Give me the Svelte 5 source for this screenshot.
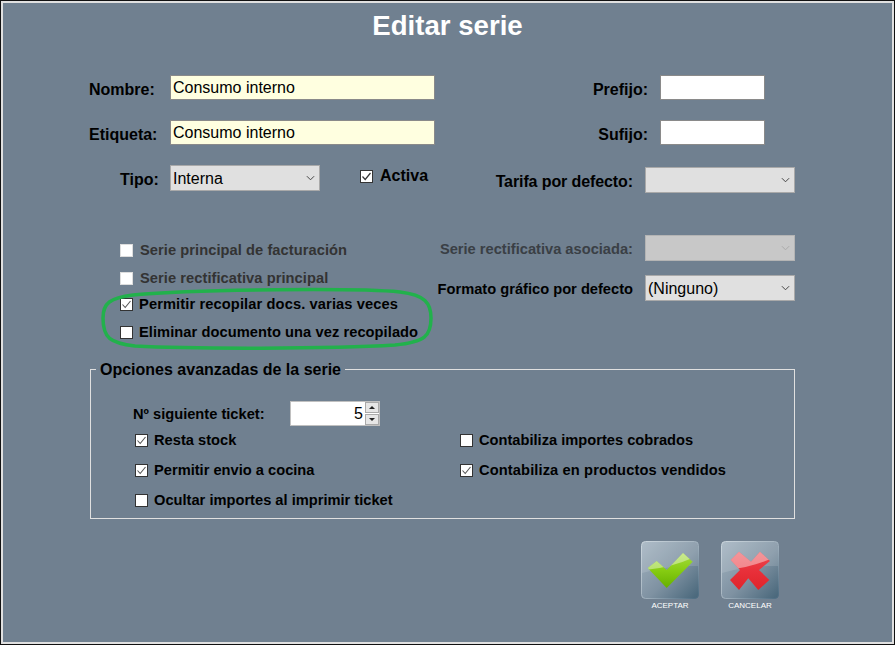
<script>
  const greenD = "M133 295 C 200 289, 360 288, 400 292 C 425 295, 431 303, 431 318 C 431 336, 425 342, 395 345 C 330 349, 190 349, 135 346 C 110 343, 103 338, 103 318 C 103 303, 110 298, 133 295 Z";
</script>

{#snippet check(text, checked = false, cls = "")}
  <label class="chk {cls}">
    <span class="box">
      {#if checked}
        <svg viewBox="0 0 13 13" width="13" height="13" aria-hidden="true"><path d="M2.5 6.5 L5.2 9.5 L10.5 3" fill="none" stroke="#555" stroke-width="1.1" /></svg>
      {/if}
    </span>
    <span>{text}</span>
  </label>
{/snippet}

{#snippet dropdown(value, cls = "")}
  <div class="select {cls}">
    <span>{value}</span>
    <svg viewBox="0 0 10 6" width="9" height="6" aria-hidden="true"><path d="M1 1 L5 5 L9 1" fill="none" stroke="currentColor" stroke-width="1.1" /></svg>
  </div>
{/snippet}

<div class="window">
  <h1>Editar serie</h1>

  <div class="top">
    <div class="col-left">
      <div class="row r1">
        <span class="lbl l-nombre">Nombre:</span>
        <input class="text yellow" value="Consumo interno" />
      </div>
      <div class="row r2">
        <span class="lbl l-etiqueta">Etiqueta:</span>
        <input class="text yellow" value="Consumo interno" />
      </div>
      <div class="row r3">
        <span class="lbl l-tipo">Tipo:</span>
        {@render dropdown("Interna", "tipo")}
        <label class="activa">
          <span class="box"><svg viewBox="0 0 13 13" width="13" height="13" aria-hidden="true"><path d="M2.5 6.5 L5.2 9.5 L10.5 3" fill="none" stroke="#333" stroke-width="1.2" /></svg></span>
          <span>Activa</span>
        </label>
      </div>
      <div class="checks">
        {@render check("Serie principal de facturación", false, "off wide")}
        {@render check("Serie rectificativa principal", false, "off wide second")}
        {@render check("Permitir recopilar docs. varias veces", true, "wider")}
        {@render check("Eliminar documento una vez recopilado", false, "wide")}
      </div>
    </div>

    <div class="col-right">
      <div class="row rr1">
        <span class="lbl">Prefijo:</span>
        <input class="text small" />
      </div>
      <div class="row rr2">
        <span class="lbl">Sufijo:</span>
        <input class="text small" />
      </div>
      <div class="row rr3">
        <span class="lbl tarifa">Tarifa por defecto:</span>
        {@render dropdown("")}
      </div>
      <div class="row rr4">
        <span class="lbl dis">Serie rectificativa asociada:</span>
        {@render dropdown("", "disabled")}
      </div>
      <div class="row rr5">
        <span class="lbl fmt">Formato gráfico por defecto</span>
        {@render dropdown("(Ninguno)")}
      </div>
    </div>
  </div>

  <fieldset>
    <legend>Opciones avanzadas de la serie</legend>
    <div class="ticket">
      <span>Nº siguiente ticket:</span>
      <div class="spin">
        <span class="num">5</span>
        <div class="arrows">
          <div class="arrow"><i class="up"></i></div>
          <div class="arrow"><i class="down"></i></div>
        </div>
      </div>
    </div>
    <div class="adv">
      <div class="adv-col">
        {@render check("Resta stock", true)}
        {@render check("Permitir envio a cocina", true)}
        {@render check("Ocultar importes al imprimir ticket", false)}
      </div>
      <div class="adv-col right">
        {@render check("Contabiliza importes cobrados", false)}
        {@render check("Contabiliza en productos vendidos", true, "wider")}
      </div>
    </div>
  </fieldset>

  <div class="actions">
    <div class="action">
      <div class="tile">
        <svg viewBox="0 0 58 58" width="58" height="58" aria-hidden="true">
          <defs>
            <linearGradient id="tb" x1="0" y1="0" x2="1" y2="1">
              <stop offset="0" stop-color="#a3b3c0" />
              <stop offset="0.55" stop-color="#7f92a2" />
              <stop offset="1" stop-color="#466579" />
            </linearGradient>
            <linearGradient id="ts" x1="0" y1="0" x2="1" y2="1">
              <stop offset="0" stop-color="#ccd6dd" />
              <stop offset="0.5" stop-color="#a5b4c0" />
              <stop offset="1" stop-color="#4a6a80" />
            </linearGradient>
            <linearGradient id="gc" x1="0" y1="0" x2="0" y2="1">
              <stop offset="0" stop-color="#a6dc40" />
              <stop offset="0.5" stop-color="#86cc12" />
              <stop offset="1" stop-color="#66b000" />
            </linearGradient>
            <linearGradient id="rc" x1="0" y1="0" x2="0" y2="1">
              <stop offset="0" stop-color="#ec4a50" />
              <stop offset="0.5" stop-color="#e8303a" />
              <stop offset="1" stop-color="#e0242a" />
            </linearGradient>
            <clipPath id="cg"><path d="M6.7 27 L15.7 20 L25.7 29 L42 12 L51.7 20.7 L25.7 47 Z" /></clipPath>
            <clipPath id="cr"><path d="M9.7 19 L18 10.7 L30 20.7 L39 10.7 L49 20 L38 29 L48.3 39 L37.3 49 L27.3 37.3 L18 49 L9 39 L19 29 Z" /></clipPath>
          </defs>
          <rect x="0.5" y="0.5" width="57" height="57" rx="4" fill="url(#tb)" stroke="url(#ts)" />
          <path d="M1 5 Q1 1 5 1 H53 Q57 1 57 5 V25 Q29 24 1 32 Z" fill="#fff" opacity="0.13" />
          <path d="M6.7 27 L15.7 20 L25.7 29 L42 12 L51.7 20.7 L25.7 47 Z" fill="url(#gc)" />
          <path d="M0 29 Q30 28 58 14 V0 H0 Z" fill="#fff" opacity="0.4" clip-path="url(#cg)" />
        </svg>
      </div>
      <span>ACEPTAR</span>
    </div>
    <div class="action">
      <div class="tile">
        <svg viewBox="0 0 58 58" width="58" height="58" aria-hidden="true">
          <rect x="0.5" y="0.5" width="57" height="57" rx="4" fill="url(#tb)" stroke="url(#ts)" />
          <path d="M1 5 Q1 1 5 1 H53 Q57 1 57 5 V25 Q29 24 1 32 Z" fill="#fff" opacity="0.13" />
          <path d="M9.7 19 L18 10.7 L30 20.7 L39 10.7 L49 20 L38 29 L48.3 39 L37.3 49 L27.3 37.3 L18 49 L9 39 L19 29 Z" fill="url(#rc)" />
          <path d="M0 29 Q30 28 58 14 V0 H0 Z" fill="#fff" opacity="0.42" clip-path="url(#cr)" />
        </svg>
      </div>
      <span>CANCELAR</span>
    </div>
  </div>

  <svg class="mark" viewBox="0 0 895 645" width="895" height="645" aria-hidden="true">
    <path d={greenD} fill="none" stroke="#22b14c" stroke-width="3.5" />
  </svg>
</div>

<style>
  :global(body) { margin: 0; }
  .window {
    position: relative;
    width: 895px;
    height: 645px;
    box-sizing: border-box;
    background: #708090;
    border: 2px solid #e0e0e0;
    outline: 1px solid #111;
    outline-offset: -1px;
    box-shadow: inset 0 0 0 1px #e0e0e0;
    font-family: "Liberation Sans", Arial, sans-serif;
    color: #000;
    overflow: hidden;
  }
  h1 {
    margin: 0;
    padding-top: 8px;
    height: 40px;
    box-sizing: content-box;
    font-size: 27.6px;
    line-height: 32px;
    text-align: center;
    color: #fff;
    font-weight: bold;
  }
  .top { display: flex; }
  .col-left { width: 418px; height: 309px; flex: none; }
  .col-right { flex: 1; }
  .row { display: flex; align-items: center; }
  .lbl { font-size: 16px; font-weight: bold; white-space: nowrap; flex: none; padding-top: 4px; }
  .text {
    box-sizing: border-box;
    height: 25px;
    flex: none;
    border: 1px solid #8a8a8a;
    padding: 0 2px;
    font: 16px "Liberation Sans", Arial, sans-serif;
    color: #000;
    outline: none;
    border-radius: 0;
    background: #fff;
  }
  .yellow { width: 265px; background: #ffffe0; }
  .small { width: 105px; }
  .r1 { padding-top: 25px; }
  .r2 { padding-top: 20px; }
  .r3 { padding-top: 20px; }
  .l-nombre { width: 81px; margin-left: 87px; }
  .l-etiqueta { width: 81px; margin-left: 87px; }
  .l-tipo { margin-left: 118px; width: 50px; }
  .select {
    position: relative;
    flex: none;
    box-sizing: border-box;
    width: 150px;
    height: 26px;
    display: flex;
    align-items: center;
    padding: 1px 0 0 2px;
    background: #e0e0e0;
    border: 1px solid #a9a9a9;
    font-size: 16px;
    color: #000;
  }
  .select svg { position: absolute; right: 4px; top: 9px; color: #444; }
  .select.disabled { background: #c8c8c8; border-color: #b4b4b4; }
  .select.disabled svg { color: #aaa; }
  .activa { display: flex; align-items: center; margin-left: 40px; font-size: 16px; font-weight: bold; gap: 7px; margin-top: -4px; }
  .box {
    box-sizing: border-box;
    display: block;
    width: 13px;
    height: 13px;
    background: #fff;
    border: 1px solid #333;
    flex: none;
    position: relative;
  }
  .box svg { position: absolute; left: -1px; top: -1px; }
  .checks { margin-top: 45px; }
  .chk { display: flex; align-items: center; gap: 6px; font-size: 14.67px; font-weight: bold; white-space: nowrap; height: 28px; margin-left: 118px; }
  .chk.wide { letter-spacing: 0.06px; }
  .chk.wider { letter-spacing: 0.11px; }
  .chk.off { color: #333; gap: 7px; }
  .chk.off .box { border-color: #ddd; }
  .chk.second { margin-bottom: -2px; }
  .col-right .row { justify-content: flex-end; padding-right: 98px; }
  .col-right .rr1, .col-right .rr2 { padding-right: 128px; }
  .rr1 { padding-top: 25px; }
  .rr1 .lbl, .rr2 .lbl { margin-right: 12px; }
  .rr2 { padding-top: 20px; }
  .rr3 { padding-top: 22px; }
  .rr3 .lbl, .rr4 .lbl, .rr5 .lbl { margin-right: 12px; }
  .tarifa { letter-spacing: -0.1px; }
  .rr4 { padding-top: 42px; }
  .rr5 { padding-top: 14px; }
  .dis { color: #3a3f45; font-size: 14.67px; padding-top: 2px; }
  .fmt { font-size: 14.67px; padding-top: 2px; }
  fieldset {
    margin: 0 0 0 88px;
    box-sizing: border-box;
    width: 705px;
    height: 160px;
    padding: 0;
    border: 1px solid #e0e0e0;
    min-inline-size: 0;
  }
  legend {
    margin-left: 5px;
    padding: 2px 4px 0;
    font-size: 16px;
    font-weight: bold;
    line-height: 18px;
  }
  .ticket { display: flex; align-items: center; padding: 22px 0 0 42px; font-size: 14.67px; font-weight: bold; }
  .ticket > span:first-child { width: 157px; }
  .spin {
    box-sizing: border-box;
    width: 90px;
    height: 25px;
    background: #fff;
    border: 1px solid #c0c0c0;
    display: flex;
    justify-content: flex-end;
    align-items: center;
    font-size: 16px;
    font-weight: normal;
  }
  .num { margin-right: 2px; }
  .arrows { width: 14px; display: flex; flex-direction: column; gap: 1px; height: 23px; }
  .arrow { flex: 1; background: #e6e6e6; border: 1px solid #aaa; box-sizing: border-box; display: flex; align-items: center; justify-content: center; }
  .arrow i { width: 0; height: 0; border-left: 3px solid transparent; border-right: 3px solid transparent; }
  .arrow .up { border-bottom: 3px solid #222; }
  .arrow .down { border-top: 3px solid #222; }
  .adv { display: flex; margin-top: -1px; }
  .adv-col { width: 325px; padding-left: 44px; flex: none; box-sizing: border-box; }
  .adv .chk { height: 30px; margin-left: 0; }
  .adv-col.right { padding-left: 44px; width: 370px; }
  .actions { display: flex; gap: 22px; padding: 22px 0 0 639px; }
  .action { width: 58px; display: flex; flex-direction: column; align-items: center; color: #fff; font-size: 8px; }
  .tile { height: 58px; }
  .tile svg { display: block; }
  .action span { margin-top: 2px; line-height: 10px; white-space: nowrap; }
  .mark { position: absolute; left: -2px; top: -2px; pointer-events: none; }
</style>
